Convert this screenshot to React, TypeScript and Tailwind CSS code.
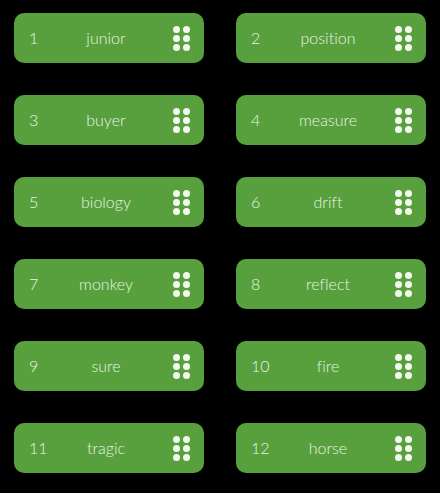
const words = [
  "junior", "position", "buyer", "measure", "biology", "drift",
  "monkey", "reflect", "sure", "fire", "tragic", "horse",
];

function Dots() {
  return (
    <div className="grid grid-cols-2 gap-x-[3px] gap-y-[2px]">
      {Array.from({ length: 6 }).map((_, i) => (
        <span key={i} className="block h-[7px] w-[7px] rounded-full bg-[#f3f8ef]" />
      ))}
    </div>
  );
}

export default function App() {
  return (
    <div
      className="min-h-[493px] w-[440px] bg-black px-[14px] pt-[13px]"
      style={{ fontFamily: "Lato, 'Open Sans', sans-serif", fontVariantLigatures: "none" }}
    >
      <div className="grid grid-cols-2 gap-x-[32px] gap-y-[32px]">
        {words.map((w, i) => (
          <div
            key={w}
            className="flex h-[50px] w-[190px] items-center rounded-[10px] bg-[#58a03d] pl-[15px] pr-[14px] text-[16px] font-light text-[#e9f3e2]"
          >
            <span className="w-[30px]">{i + 1}</span>
            <span className="flex-1 text-center">{w}</span>
            <div className="ml-[20px]">
              <Dots />
            </div>
          </div>
        ))}
      </div>
    </div>
  );
}
